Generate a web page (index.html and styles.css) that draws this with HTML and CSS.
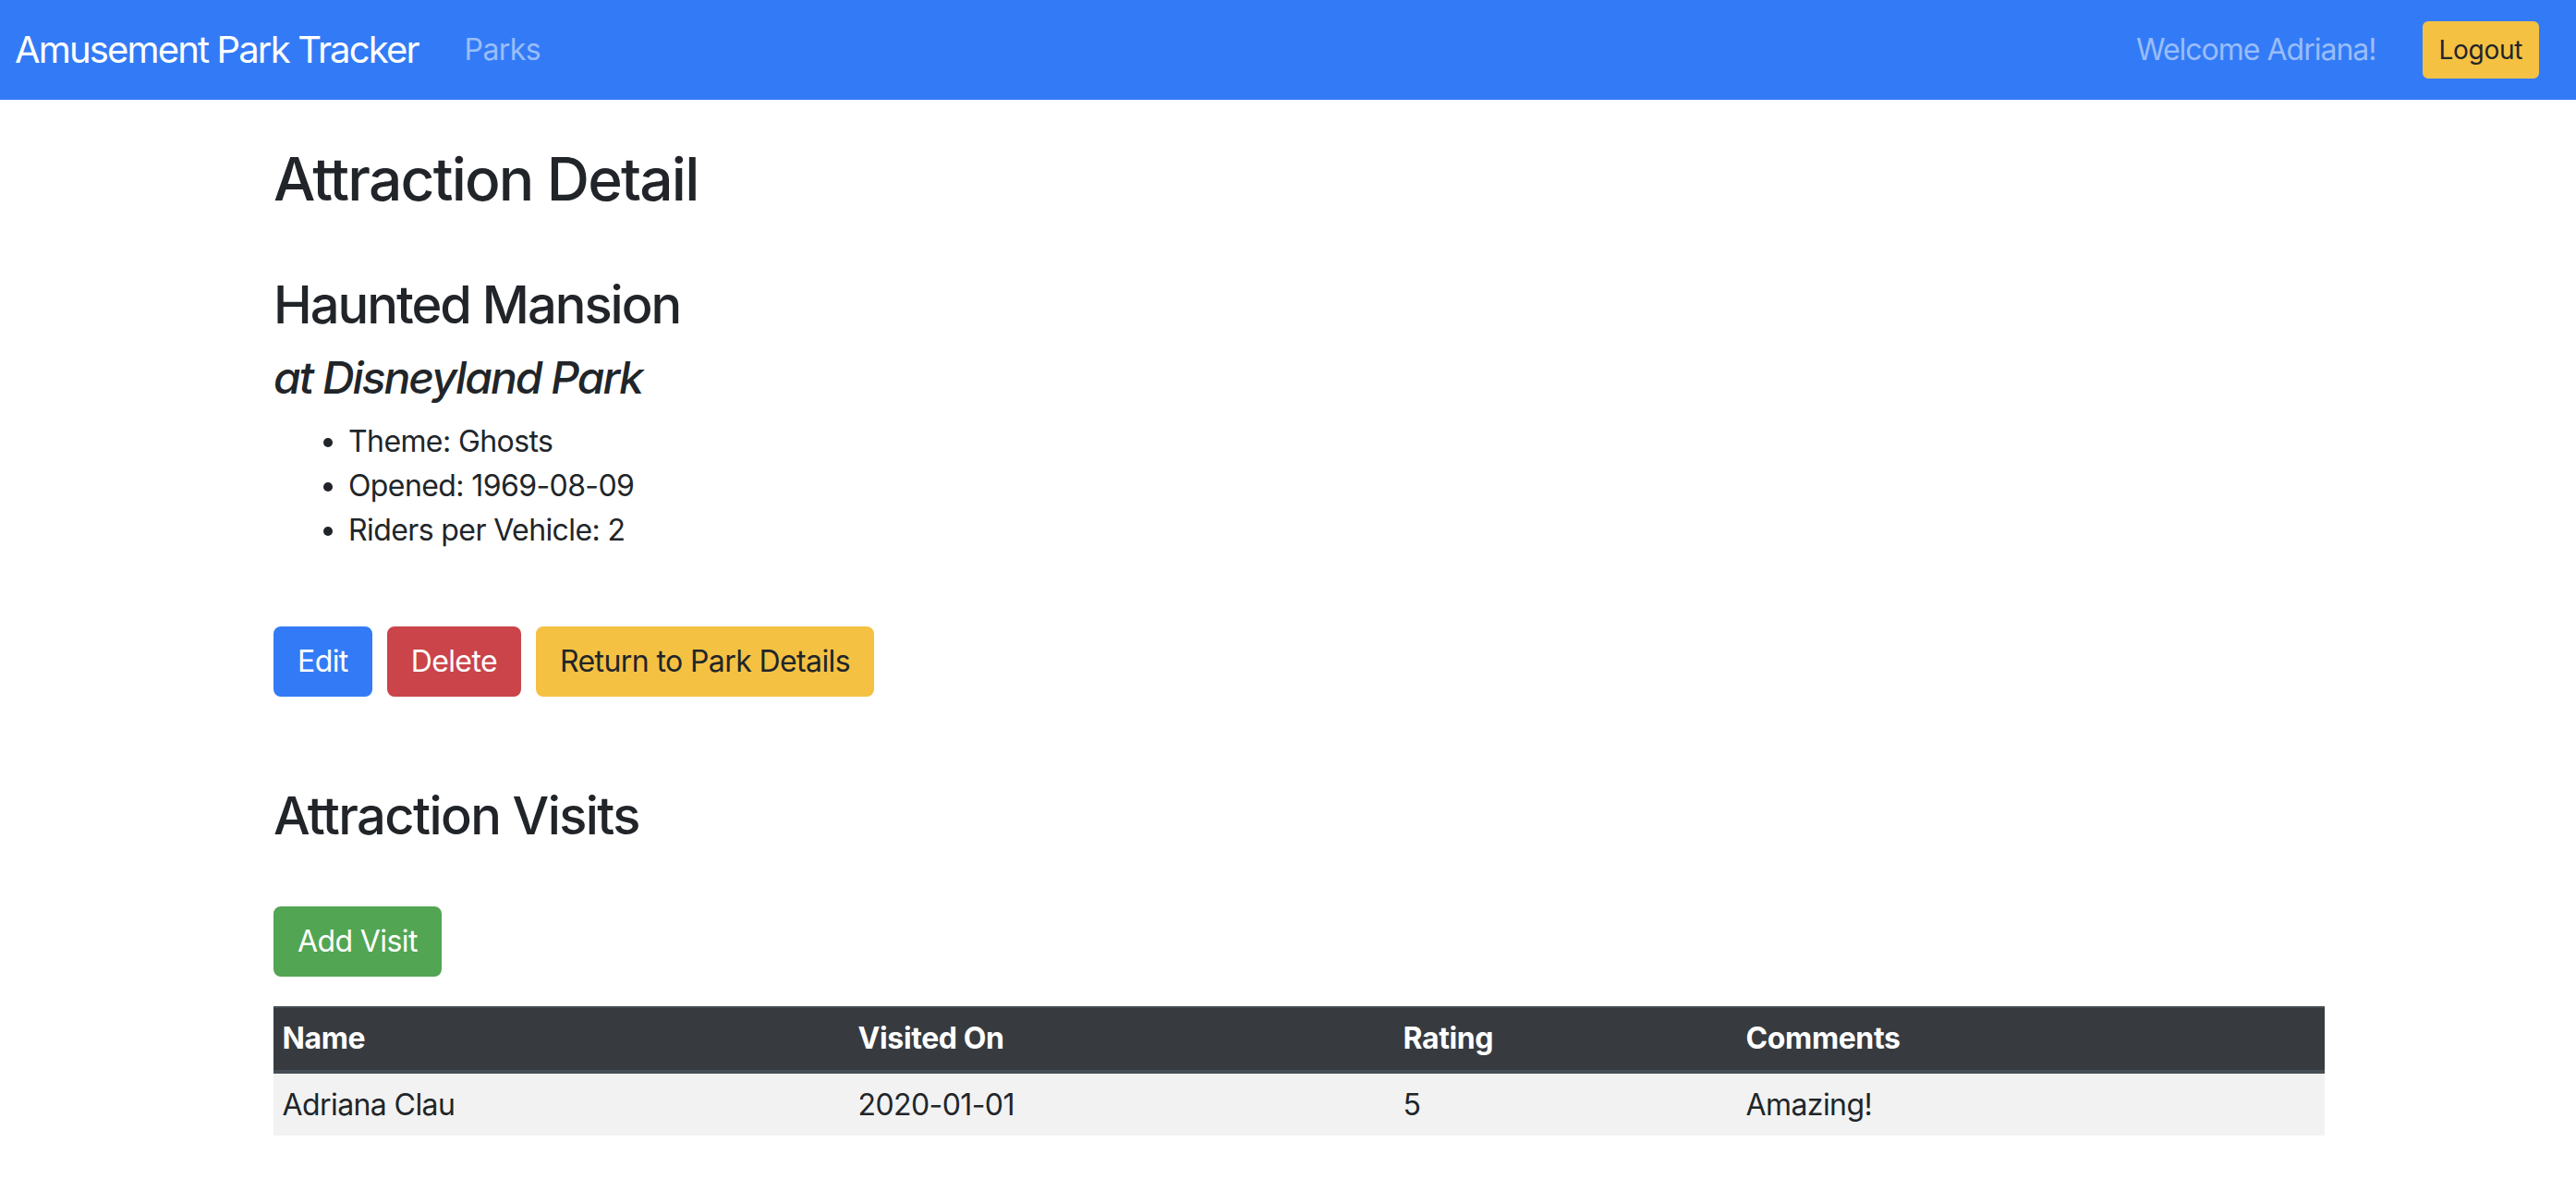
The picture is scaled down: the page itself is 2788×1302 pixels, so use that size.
FILE: index.html
```html
<!DOCTYPE html>
<html lang="en">
<head>
<meta charset="utf-8">
<title>Amusement Park Tracker</title>
<link rel="stylesheet" href="styles.css">
</head>
<body>
<nav class="navbar">
  <a class="brand" href="#">Amusement Park Tracker</a>
  <a class="nav-link" href="#">Parks</a>
  <div class="nav-right">
    <span class="nav-text">Welcome Adriana!</span>
    <button class="btn btn-sm btn-warning">Logout</button>
  </div>
</nav>
<main class="container">
  <h2 class="page-title">Attraction Detail</h2>
  <h3 class="attr-name">Haunted Mansion</h3>
  <h4 class="attr-park">at Disneyland Park</h4>
  <ul class="attr-facts">
    <li>Theme: Ghosts</li>
    <li>Opened: 1969-08-09</li>
    <li>Riders per Vehicle: 2</li>
  </ul>
  <div class="actions">
    <a class="btn btn-primary" href="#">Edit</a>
    <a class="btn btn-danger" href="#">Delete</a>
    <a class="btn btn-warning" href="#">Return to Park Details</a>
  </div>
  <h3 class="section-title">Attraction Visits</h3>
  <div class="add-row">
    <a class="btn btn-success" href="#">Add Visit</a>
  </div>
  <table class="table">
    <colgroup>
      <col class="col-name">
      <col class="col-date">
      <col class="col-rating">
      <col class="col-comments">
    </colgroup>
    <thead>
      <tr><th>Name</th><th>Visited On</th><th>Rating</th><th>Comments</th></tr>
    </thead>
    <tbody>
      <tr><td>Adriana Clau</td><td>2020-01-01</td><td>5</td><td>Amazing!</td></tr>
    </tbody>
  </table>
</main>
</body>
</html>
```
FILE: styles.css
```css
* { box-sizing: border-box; }
html, body { margin: 0; padding: 0; }
body {
  font-family: Inter, "Noto Sans", "Liberation Sans", sans-serif;
  font-size: 32px;
  line-height: 1.5;
  letter-spacing: -0.6px;
  color: #212529;
  background: #fff;
}
a { text-decoration: none; }

.navbar {
  display: flex;
  align-items: center;
  height: 108px;
  padding: 0 40px 0 16px;
  background: #337bf6;
}
.brand {
  font-size: 40px;
  line-height: 60px;
  color: #fff;
  letter-spacing: -1.85px;
}
.nav-link {
  margin-left: 50px;
  font-size: 32px;
  line-height: 48px;
  color: rgba(255, 255, 255, 0.5);
}
.nav-right {
  margin-left: auto;
  display: flex;
  align-items: center;
}
.nav-text {
  font-size: 32px;
  line-height: 48px;
  color: rgba(255, 255, 255, 0.5);
  margin-right: 50px;
  letter-spacing: -1px;
}

.btn {
  display: inline-block;
  font-family: inherit;
  font-size: 32px;
  line-height: 48px;
  letter-spacing: -0.6px;
  padding: 12px 24px;
  border: 2px solid transparent;
  border-radius: 8px;
  cursor: pointer;
}
.btn-sm {
  font-size: 28px;
  line-height: 42px;
  padding: 8px 16px;
  border-radius: 6px;
  letter-spacing: -0.3px;
}
.btn-primary { background: #337bf6; border-color: #337bf6; color: #fff; }
.btn-danger { background: #ca444a; border-color: #ca444a; color: #fff; }
.btn-warning { background: #f5c143; border-color: #f5c143; color: #212529; }
.btn-success { background: #52a552; border-color: #52a552; color: #fff; }

.container {
  margin-left: 296px;
  width: 2220px;
  padding-top: 48px;
  padding-bottom: 60px;
}
h2, h3, h4 {
  font-weight: 500;
  line-height: 1.2;
  margin: 0 0 16px;
}
.page-title { font-size: 64px; margin-bottom: 64px; letter-spacing: -1.8px; }
.attr-name { font-size: 56px; letter-spacing: -2px; }
.attr-park { font-size: 48px; font-style: italic; letter-spacing: -2px; }
.attr-facts {
  margin: 0;
  padding-left: 81px;
}
.actions {
  display: flex;
  gap: 16px;
  margin-top: 80px;
}
.section-title { font-size: 56px; margin-top: 96px; margin-bottom: 0; letter-spacing: -1.6px; }
.add-row { margin-top: 64px; display: flex; }

.table {
  margin-top: 32px;
  width: 100%;
  border-collapse: collapse;
  table-layout: fixed;
}
.col-name { width: 623px; }
.col-date { width: 590px; }
.col-rating { width: 371px; }
.col-comments { width: 636px; }
.table th, .table td {
  padding: 9.6px;
  text-align: left;
  vertical-align: top;
}
.table thead th {
  background: #373b3f;
  color: #fff;
  font-weight: 700;
  letter-spacing: -0.4px;
  border-top: 2px solid #474d55;
  border-bottom: 4px solid #474d55;
}
.table tbody tr { background: #f2f2f2; }
```
